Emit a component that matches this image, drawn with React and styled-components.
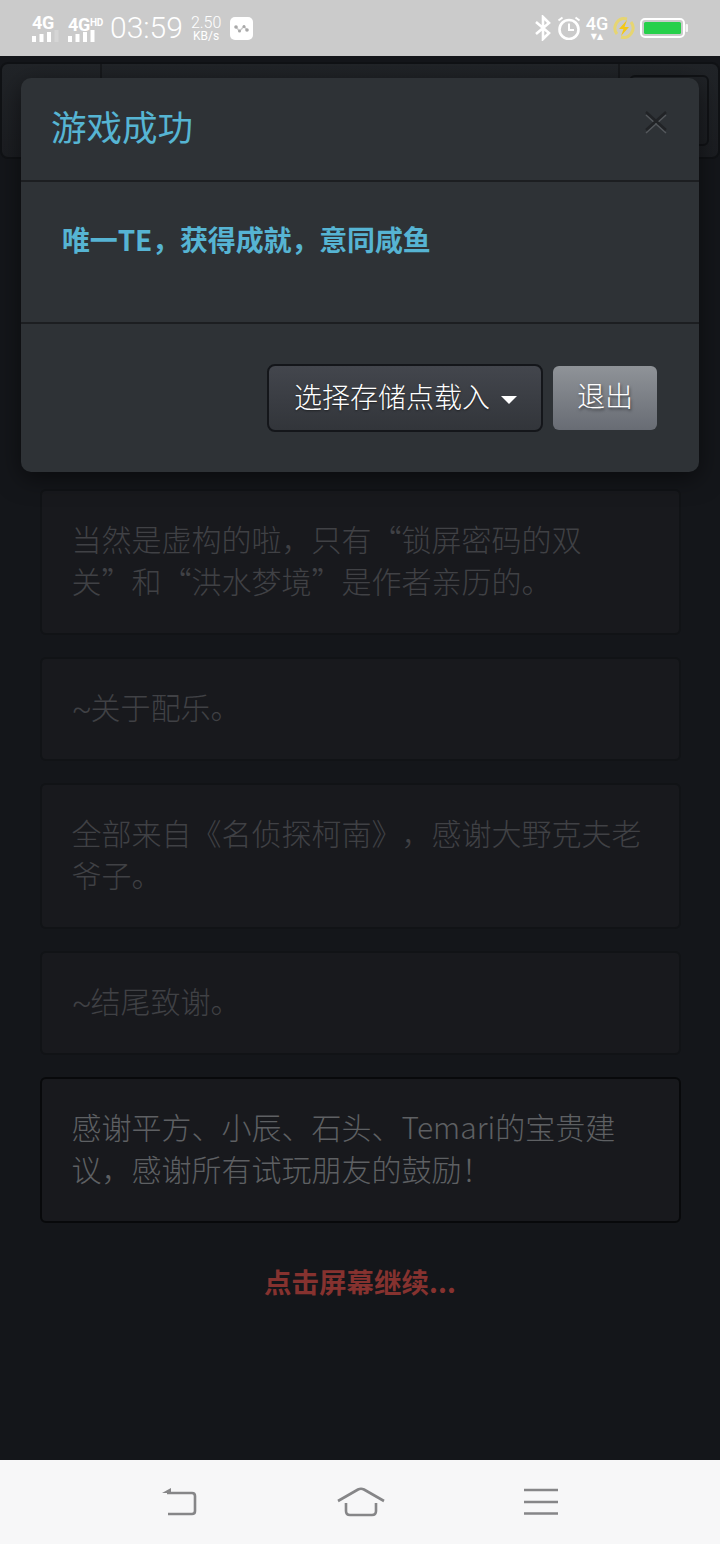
import React from 'react';
import styled, { createGlobalStyle } from 'styled-components';

const GlobalStyle = createGlobalStyle`
  html, body {
    margin: 0;
    padding: 0;
    background: #14161a;
    font-family: "Noto Sans CJK SC", sans-serif;
  }
  * {
    box-sizing: border-box;
  }
`;

const cards = [
  { lines: ['当然是虚构的啦，只有“锁屏密码的双', '关”和“洪水梦境”是作者亲历的。'] },
  { lines: ['关于配乐。'], tilde: true },
  { lines: ['全部来自《名侦探柯南》，感谢大野克夫老', '爷子。'] },
  { lines: ['结尾致谢。'], tilde: true },
  { lines: ['感谢平方、小辰、石头、Temari的宝贵建', '议，感谢所有试玩朋友的鼓励！'], active: true },
];

function SignalBars({ dim }) {
  return (
    <svg width="30" height="12" viewBox="0 0 30 12">
      {[6, 8, 10, 12].map((h, i) => (
        <rect
          key={h}
          x={i * 7.5}
          y={12 - h}
          width="4"
          height={h}
          fill="#fff"
          opacity={dim && i === 3 ? 0.2 : 1}
        />
      ))}
    </svg>
  );
}

function WaveIcon() {
  return (
    <svg width="23" height="23" viewBox="0 0 23 23">
      <rect width="23" height="23" rx="5" fill="#fff" />
      <path d="M6 10 L9.500 14 L14 9.500 L17 13" fill="none" stroke="#d0d0d0" strokeWidth="1.600" />
      <circle cx="6" cy="10" r="1.800" fill="#a8a8a8" />
      <circle cx="9.500" cy="14" r="1.500" fill="#a8a8a8" />
      <circle cx="14" cy="9.500" r="1.500" fill="#a8a8a8" />
      <circle cx="17" cy="13" r="1.800" fill="#a8a8a8" />
    </svg>
  );
}

function BluetoothIcon() {
  return (
    <svg width="18" height="26" viewBox="0 0 18 26">
      <path d="M2 7 L15 18 L9 24 V2 L15 8 L2 19" fill="none" stroke="#fff" strokeWidth="2.600" />
    </svg>
  );
}

function AlarmIcon() {
  return (
    <svg width="24" height="24" viewBox="0 0 24 24">
      <circle cx="12" cy="13.500" r="9.500" fill="none" stroke="#fff" strokeWidth="2.600" />
      <path d="M12 7.500 V14 H17" fill="none" stroke="#fff" strokeWidth="2" />
      <path d="M1.500 4.500 L5.500 1.500 M22.500 4.500 L18.500 1.500" stroke="#fff" strokeWidth="2" />
    </svg>
  );
}

function ChargeIcon() {
  return (
    <svg width="22" height="22" viewBox="0 0 22 22">
      <path d="M4 17 A9.500 9.500 0 0 1 14 2 M18 5 A9.500 9.500 0 0 1 8 20" fill="none" stroke="#e6d572" strokeWidth="3" />
      <path d="M14 3 L6 12 H10.500 L8 19 L16 10 H11.500 Z" fill="#f4c815" />
    </svg>
  );
}

function Battery() {
  return (
    <svg width="48" height="20" viewBox="0 0 48 20">
      <rect x="1" y="1" width="43" height="18" rx="4" fill="none" stroke="#fff" strokeWidth="2" />
      <rect x="4" y="4" width="37" height="12" rx="1.500" fill="#27d04b" />
      <rect x="45.500" y="6" width="2.500" height="8" rx="1" fill="#fff" opacity="0.8" />
    </svg>
  );
}

function CloseIcon() {
  return (
    <svg width="26" height="26" viewBox="0 0 26 26">
      <path d="M3 6 L13 15 L23 6 M3 24 L13 15 L23 24" fill="none" stroke="#54585c" strokeWidth="1.500" />
      <path d="M3 3 L23 21 M23 3 L3 21" fill="none" stroke="#212326" strokeWidth="2.400" />
    </svg>
  );
}

function BackIcon() {
  return (
    <svg width="36" height="30" viewBox="0 0 36 30">
      <path d="M1 6 L10 1 V6 Z" fill="#868688" />
      <path d="M6 6 H31 Q34 6 34 9 V24 Q34 27 31 27 H7" fill="none" stroke="#868688" strokeWidth="2.600" />
    </svg>
  );
}

function HomeIcon() {
  return (
    <svg width="48" height="30" viewBox="0 0 48 30">
      <path d="M1 14 L21 2.500 Q24 1 27 2.500 L47 14" fill="none" stroke="#868688" strokeWidth="2.600" />
      <path d="M9 16 V24 Q9 28 13 28 H35 Q39 28 39 24 V16" fill="none" stroke="#868688" strokeWidth="2.600" />
    </svg>
  );
}

function MenuIcon() {
  return (
    <svg width="34" height="28" viewBox="0 0 34 28">
      <path d="M0 2 H34 M0 14 H34 M0 25.500 H34" stroke="#868688" strokeWidth="2.600" />
    </svg>
  );
}

export default function App() {
  return (
    <Page>
      <GlobalStyle />
      <StatusBar>
        <StatusGroup>
          <Signal>
            <SignalLabel>4G</SignalLabel>
            <SignalBars dim />
          </Signal>
          <Signal>
            <SignalLabel>
              4G<Hd>HD</Hd>
            </SignalLabel>
            <SignalBars />
          </Signal>
          <Clock>03:59</Clock>
          <Speed>
            <SpeedValue>2.50</SpeedValue>
            <SpeedUnit>KB/s</SpeedUnit>
          </Speed>
          <WaveIcon />
        </StatusGroup>
        <StatusGroup $right>
          <BluetoothIcon />
          <AlarmIcon />
          <DataBadge>
            <DataLabel>4G</DataLabel>
            <DataArrows>▼▲</DataArrows>
          </DataBadge>
          <ChargeIcon />
          <Battery />
        </StatusGroup>
      </StatusBar>

      <Main>
        <NavBar>
          <NavSide />
          <NavMiddle />
          <NavEnd>
            <NavToggle />
          </NavEnd>
        </NavBar>

        <CardList>
          {cards.map((card, i) => (
            <Card key={i} $active={card.active}>
              {card.lines.map((line) => (
                <CardLine key={line}>
                  {card.tilde && <Tilde>~</Tilde>}
                  {line}
                </CardLine>
              ))}
            </Card>
          ))}
        </CardList>

        <ContinueHint>点击屏幕继续...</ContinueHint>

        <Modal>
          <ModalHeader>
            <ModalTitle>游戏成功</ModalTitle>
            <CloseButton>
              <CloseIcon />
            </CloseButton>
          </ModalHeader>
          <ModalBody>
            <ModalMessage>唯一TE，获得成就，意同咸鱼</ModalMessage>
          </ModalBody>
          <ModalFooter>
            <DropdownButton>
              选择存储点载入
              <Caret />
            </DropdownButton>
            <ExitButton>退出</ExitButton>
          </ModalFooter>
        </Modal>
      </Main>

      <BottomBar>
        <BackSlot>
          <BackIcon />
        </BackSlot>
        <BottomSlot>
          <HomeIcon />
        </BottomSlot>
        <BottomSlot>
          <MenuIcon />
        </BottomSlot>
      </BottomBar>
    </Page>
  );
}

const Page = styled.div`
  width: 720px;
  height: 1544px;
  display: flex;
  flex-direction: column;
  overflow: hidden;
`;

const StatusBar = styled.div`
  height: 56px;
  flex: none;
  background: #cbcbcb;
  color: #fff;
  display: flex;
  align-items: center;
  justify-content: space-between;
  padding: 0 32px;
`;

const StatusGroup = styled.div`
  display: flex;
  align-items: center;
  gap: ${(p) => (p.$right ? '5px' : '6px')};
`;

const Signal = styled.div`
  width: 30px;
  display: flex;
  flex-direction: column;
  line-height: 0;
`;

const SignalLabel = styled.div`
  font: 700 18px/15px Roboto, sans-serif;
  white-space: nowrap;
  height: 15px;
  letter-spacing: -0.3px;
`;

const Hd = styled.span`
  font-size: 10px;
  vertical-align: 5px;
`;

const Clock = styled.div`
  font: 300 30px/32px Roboto, sans-serif;
  margin-left: 6px;
`;

const Speed = styled.div`
  display: flex;
  flex-direction: column;
  align-items: center;
  margin: 0 3px 0 2px;
`;

const SpeedValue = styled.div`
  font: 300 16px/15px Roboto, sans-serif;
`;

const SpeedUnit = styled.div`
  font: 400 12px/12px Roboto, sans-serif;
`;

const DataBadge = styled.div`
  display: flex;
  flex-direction: column;
  align-items: center;
  width: 22px;
`;

const DataLabel = styled.div`
  font: 500 18px/16px Roboto, sans-serif;
`;

const DataArrows = styled.div`
  font: 400 8px/9px "DejaVu Sans", sans-serif;
  white-space: nowrap;
`;

const Main = styled.div`
  position: relative;
  flex: 1;
  background: #14161a;
  display: flex;
  flex-direction: column;
  align-items: center;
  padding-top: 6px;
`;

const NavBar = styled.div`
  width: 720px;
  height: 97px;
  flex: none;
  background: linear-gradient(#212428, #1b1d21);
  border: 2px solid #101215;
  border-radius: 8px;
  display: flex;
`;

const NavSide = styled.div`
  width: 100px;
  border-right: 2px solid #17191c;
`;

const NavMiddle = styled.div`
  flex: 1;
`;

const NavEnd = styled.div`
  width: 100px;
  border-left: 2px solid #17191c;
  padding: 11px 9px;
  display: flex;
`;

const NavToggle = styled.div`
  flex: 1;
  border: 2px solid #111316;
  border-radius: 6px;
`;

const CardList = styled.div`
  width: 641px;
  margin-top: 330px;
  display: flex;
  flex-direction: column;
  gap: 22px;
`;

const Card = styled.div`
  background: #18191d;
  border: 2px solid ${(p) => (p.$active ? '#08090b' : '#111316')};
  border-radius: 6px;
  padding: 26px 30px 32px;
  color: ${(p) => (p.$active ? '#5e6063' : '#404145')};
  font: 300 30px/42px "Noto Sans CJK SC", sans-serif;
  text-spacing-trim: space-all;
`;

const CardLine = styled.div`
  height: 42px;
  white-space: nowrap;
`;

const Tilde = styled.span`
  font-family: Roboto, sans-serif;
  display: inline-block;
  width: 19px;
`;

const ContinueHint = styled.div`
  margin-top: 36px;
  font: 700 27.500px/44px "Noto Sans CJK SC", sans-serif;
  color: #86322f;
`;

const Modal = styled.div`
  position: absolute;
  left: 21px;
  top: 22px;
  width: 678px;
  height: 394px;
  background: #2e3236;
  border-radius: 10px;
  box-shadow: 0 6px 24px rgba(0, 0, 0, 0.5);
  display: flex;
  flex-direction: column;
`;

const ModalHeader = styled.div`
  height: 104px;
  flex: none;
  padding: 0 30px;
  border-bottom: 2px solid #1c1e21;
  display: flex;
  align-items: flex-start;
  justify-content: space-between;
`;

const ModalTitle = styled.div`
  margin-top: 22px;
  font: 400 35.500px/52px "Noto Sans CJK SC", sans-serif;
  color: #56b5d3;
`;

const CloseButton = styled.div`
  margin-top: 31px;
  line-height: 0;
`;

const ModalBody = styled.div`
  height: 142px;
  flex: none;
  padding: 36px 41px 0;
  border-bottom: 2px solid #1c1e21;
`;

const ModalMessage = styled.div`
  font: 700 28px/42px "Noto Sans CJK SC", sans-serif;
  color: #56b4d3;
  letter-spacing: -0.15px;
  text-spacing-trim: space-all;
`;

const ModalFooter = styled.div`
  flex: 1;
  padding: 42px 42px 0 0;
  display: flex;
  justify-content: flex-end;
  align-items: flex-start;
  gap: 10px;
`;

const DropdownButton = styled.div`
  width: 276px;
  height: 68px;
  margin-top: -2px;
  border: 2px solid #14161a;
  border-radius: 8px;
  background: linear-gradient(#43464d, #32353a);
  color: #fff;
  font: 300 28px/58px "Noto Sans CJK SC", sans-serif;
  padding: 0 0 4px 25px;
  display: flex;
  align-items: center;
  text-shadow: 0 1px 2px rgba(0, 0, 0, 0.5);
`;

const Caret = styled.span`
  width: 0;
  height: 0;
  margin: 8px 0 0 11px;
  border-left: 8px solid transparent;
  border-right: 8px solid transparent;
  border-top: 8px solid #fff;
`;

const ExitButton = styled.div`
  width: 104px;
  height: 64px;
  border-radius: 6px;
  background: linear-gradient(#8f9398, #686c74);
  color: #fff;
  font: 300 28px/58px "Noto Sans CJK SC", sans-serif;
  text-align: center;
  text-shadow: 1px 2px 3px rgba(0, 0, 0, 0.5);
`;

const BottomBar = styled.div`
  height: 84px;
  flex: none;
  background: #f7f7f8;
  display: flex;
  justify-content: center;
  padding-left: 2px;
`;

const BottomSlot = styled.div`
  width: 180px;
  display: flex;
  align-items: center;
  justify-content: center;
`;

const BackSlot = styled(BottomSlot)`
  padding-right: 4px;
`;
